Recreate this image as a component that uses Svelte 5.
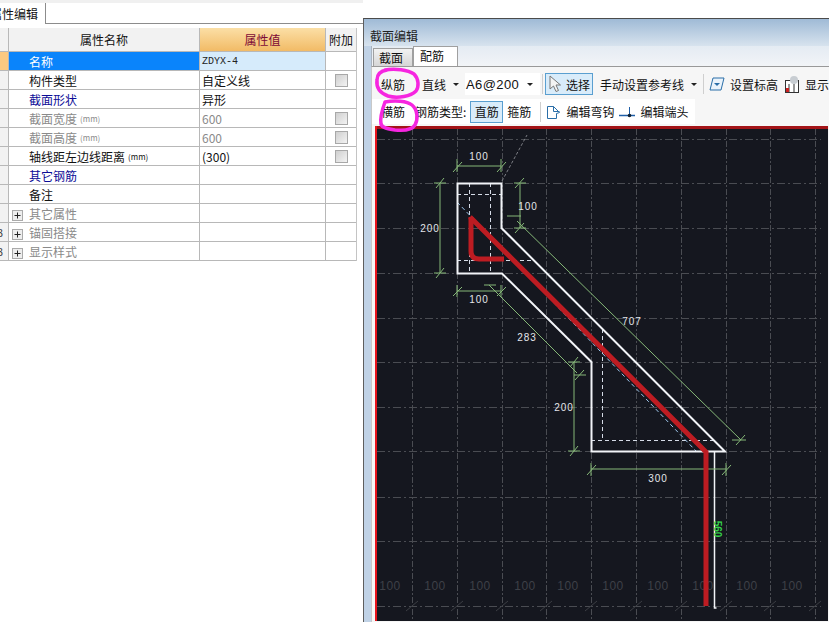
<script>
    const rows = [
        { name: "名称", value: "ZDYX-4", mono: true, selected: true },
        { name: "构件类型", value: "自定义线", check: true },
        { name: "截面形状", value: "异形", blue: true },
        { name: "截面宽度", unit: "(mm)", value: "600", gray: true, check: true },
        { name: "截面高度", unit: "(mm)", value: "600", gray: true, check: true },
        { name: "轴线距左边线距离", unit: "(mm)", value: "(300)", check: true },
        { name: "其它钢筋", value: "", blue: true },
        { name: "备注", value: "" },
        { name: "其它属性", value: "", gray: true, plus: true },
        { name: "锚固搭接", value: "", gray: true, plus: true, mark: "3" },
        { name: "显示样式", value: "", gray: true, plus: true, mark: "3" }
    ];

    const gridX = [413, 458, 503, 547, 592, 637, 682, 727, 771, 816];
    const gridY = [140, 184, 229, 274, 319, 363, 408, 452, 498, 542, 607];
    const labelX = [391, 436, 481, 526, 569, 614, 659, 704, 748, 793];

    // dimension lines: x1 y1 x2 y2
    const dims = [
        [458, 167, 502, 167], [458, 160, 458, 173], [502, 160, 502, 173], [454, 173, 463, 163], [498, 173, 507, 163],
        [441, 184, 441, 274], [435, 184, 447, 184], [435, 274, 447, 274], [437, 189, 445, 179], [437, 279, 445, 269],
        [521, 184, 521, 229], [515, 184, 527, 184], [515, 229, 527, 229], [516, 189, 525, 179], [516, 234, 525, 224],
        [508, 217, 522, 217], [518, 222, 742, 441], [733, 441, 747, 441], [737, 446, 746, 436],
        [458, 292, 502, 292], [458, 286, 458, 298], [502, 286, 502, 298], [454, 297, 463, 288], [498, 297, 507, 288],
        [490, 286, 578, 374], [485, 286, 497, 286], [575, 376, 587, 376], [576, 381, 585, 371],
        [575, 363, 575, 452], [569, 363, 581, 363], [569, 452, 581, 452], [571, 368, 579, 358], [571, 457, 579, 447],
        [592, 470, 727, 470], [592, 464, 592, 477], [727, 464, 727, 477], [588, 476, 597, 466], [723, 476, 732, 466]
    ];

    const dimLabels = [
        { x: 480, y: 161, t: "100" },
        { x: 431, y: 233, t: "200" },
        { x: 529, y: 211, t: "100" },
        { x: 480, y: 304, t: "100" },
        { x: 528, y: 342, t: "283" },
        { x: 633, y: 326, t: "707" },
        { x: 565, y: 412, t: "200" },
        { x: 659, y: 483, t: "300" }
    ];
</script>

<div class="page">
    <div class="left">
        <div class="tabstrip">
            <div class="proptab"><span>属性编辑</span></div>
        </div>
        <div class="grid">
            <div class="row head">
                <div class="mark"></div>
                <div class="cell name center">属性名称</div>
                <div class="cell value center valuehead">属性值</div>
                <div class="cell extra center">附加</div>
            </div>
            {#each rows as r}
                <div class="row">
                    <div class="mark" class:current={r.selected}>
                        {#if r.mark}<span>{r.mark}</span>{/if}
                    </div>
                    <div class="cell name" class:sel={r.selected} class:blue={r.blue} class:gray={r.gray}>
                        {#if r.plus}
                            <span class="plus"><svg width="11" height="11" viewBox="0 0 11 11"><rect x="0.5" y="0.5" width="10" height="10" fill="#eee" stroke="#aaa"/><path d="M2.5 5.5h6M5.5 2.5v6" stroke="#222"/></svg></span>
                        {/if}
                        <span class="label">{r.name}</span>
                        {#if r.unit}<span class="unit">{r.unit}</span>{/if}
                    </div>
                    <div class="cell value" class:selval={r.selected} class:gray={r.gray} class:mono={r.mono}>{r.value}</div>
                    <div class="cell extra center">
                        {#if r.check}<span class="check"></span>{/if}
                    </div>
                </div>
            {/each}
        </div>
    </div>

    <div class="window">
        <div class="title">截面编辑</div>
        <div class="body">
            <div class="tabs">
                <div class="tab">截面</div>
                <div class="tab active">配筋</div>
            </div>
            <div class="panel">
                <div class="bar">
                    <span class="tool first">纵筋</span>
                    <span class="tool line">直线</span>
                    <span class="caret"></span>
                    <span class="combo">A6@200<span class="caret"></span></span>
                    <span class="sep"></span>
                    <span class="btn pick">
                        <svg width="15" height="18" viewBox="0 0 15 18"><path d="M2 1v13l3.5-3 2.5 5.5 2.5-1-2.5-5.5h4.500z" fill="#f4f4f4" stroke="#777"/></svg>
                        选择
                    </span>
                    <span class="tool ref">手动设置参考线</span>
                    <span class="caret"></span>
                    <span class="sep gapsep"></span>
                    <svg class="icon" width="16" height="16" viewBox="0 0 16 16"><path d="M4 2h11l-3 12H1z" fill="#eaf3fb" stroke="#2a6ea8"/><path d="M5 7h6l-3 3z" fill="#2a6ea8"/></svg>
                    <span class="tool level">设置标高</span>
                    <svg class="icon chart" width="16" height="17" viewBox="0 0 16 17"><rect x="1.500" y="4.500" width="13" height="12" fill="#fff" stroke="#333"/><path d="M5 8v8M10 8v8" stroke="#333"/><rect x="2" y="12" width="3" height="4" fill="#c22"/><circle cx="10" cy="4" r="4" fill="#c8cdd2"/></svg>
                    <span class="tool show">显示</span>
                </div>
                <div class="bar second">
                    <div class="barwhite">
                        <span class="tool first2">横筋</span>
                        <span class="tool kind">钢筋类型:</span>
                        <span class="btn straight">直筋</span>
                        <span class="tool stir">箍筋</span>
                        <span class="sep hooksep"></span>
                        <svg class="icon" width="15" height="16" viewBox="0 0 15 16"><path d="M1.500 2.500h6l6 6-3 1v5h-9z" fill="#fff" stroke="#2a6ea8"/><path d="M7.500 2.500v5h6" fill="none" stroke="#2a6ea8"/></svg>
                        <span class="tool hook">编辑弯钩</span>
                        <svg class="icon endicon" width="16" height="14" viewBox="0 0 16 14"><path d="M0 10.500h16" stroke="#1f5fa8" stroke-width="1.500"/><path d="M10.500 2v8" stroke="#1f5fa8"/><circle cx="10.500" cy="10.500" r="1.800" fill="#123"/></svg>
                        <span class="tool end">编辑端头</span>
                    </div>
                </div>
                <svg class="canvas" width="453" height="495" viewBox="376 127 453 495">
                    <rect x="376" y="127" width="453" height="495" fill="#15171f"/>
                    <path d="M376 128.500h453" stroke="#a31418" stroke-width="3"/>
                    <path d="M377 127v495" stroke="#e8141c" stroke-width="2"/>

                    {#each gridX as x}
                        <path d="M{x + 0.5} 130V622" stroke="#4a4c52" stroke-dasharray="6 2 2 2"/>
                    {/each}
                    {#each gridY as y}
                        <path d="M378 {y + 0.5}H822" stroke="#4a4c52" stroke-dasharray="8 3 2 3"/>
                    {/each}
                    {#each gridX as x}
                        <path d="M{x - 6} 612l12 -10" stroke="#3c3e44"/>
                    {/each}
                    {#each labelX as x}
                        <text class="faint" {x} y="591">100</text>
                    {/each}

                    <path d="M503 182L528 136" stroke="#7c7e84" stroke-dasharray="3 2"/>

                    <g stroke="#d5dbe6" stroke-dasharray="4 3" fill="none">
                        <path d="M470.500 184V274M491.500 184V274M458 195.500H502M458 261.500H535"/>
                        <path d="M603.500 330V441M592 441.500H717"/>
                    </g>
                    <path d="M458 203L697 452" stroke="#9fc8ee" stroke-dasharray="4 3" fill="none"/>

                    <path d="M458.500 184.500H502.500V229L726 452.500H592.500V363L503 274.500H458.500Z" fill="none" stroke="#f2f4f8" stroke-width="2"/>
                    <path d="M715.500 453V609h2" fill="none" stroke="#f2f4f8" stroke-width="1.500"/>

                    <g stroke="#86b878" fill="none">
                        {#each dims as d}
                            <line x1={d[0]} y1={d[1]} x2={d[2]} y2={d[3]}/>
                        {/each}
                    </g>
                    {#each dimLabels as l}
                        <text class="dim" x={l.x} y={l.y}>{l.t}</text>
                    {/each}
                    <text class="green" transform="translate(715 530) rotate(90)">560</text>

                    <path d="M471 218L707 453V607" fill="none" stroke="#bd1c22" stroke-width="5"/>
                    <path d="M472 218V252Q472 260 480 260H505" fill="none" stroke="#bd1c22" stroke-width="5"/>
                </svg>
            </div>
        </div>
    </div>

    <svg class="scribble" width="829" height="622" viewBox="0 0 829 622">
        <path d="M385 70C395 68 408 70 414 74C419 79 419 87 416 91C411 96 398 99 388 96C380 93 376 88 377 80C377 75 380 71 387 70"/>
        <path d="M385 102C395 100 407 101 412 105C418 110 418 120 415 125C412 130 405 131 395 130C388 129 382 128 381 124C380 118 382 110 385 102"/>
    </svg>
</div>

<style>
    :global(body) {
        margin: 0;
        background: #fff;
    }

    .page {
        position: relative;
        display: flex;
        width: 829px;
        height: 622px;
        overflow: hidden;
        font-family: "Noto Sans CJK SC", "Liberation Sans", sans-serif;
        font-size: 12px;
        color: #111;
        background: #fff;
    }

    .left {
        width: 363px;
        flex-shrink: 0;
    }

    .tabstrip {
        height: 20px;
        padding-top: 3px;
        background: linear-gradient(#f0f0f0 0, #f0f0f0 3px, #fff 3px);
        border-bottom: 1px solid #8c8c8c;
    }

    .proptab {
        display: flex;
        justify-content: flex-end;
        box-sizing: border-box;
        width: 46px;
        height: 21px;
        padding: 1px 7px 0 0;
        background: #fff;
        border-right: 1px solid #8c8c8c;
        line-height: 20px;
        white-space: nowrap;
    }

    .proptab span {
        flex-shrink: 0;
    }

    .grid {
        width: 357px;
        margin-top: 4px;
        border-right: 1px solid #c4c4c4;
        box-sizing: border-box;
    }

    .row {
        display: flex;
        height: 19px;
        box-sizing: border-box;
        border-bottom: 1px solid #b8b8b8;
    }

    .row.head {
        height: 24px;
        background: #f2f2f2;
    }

    .mark {
        display: flex;
        justify-content: flex-end;
        padding-right: 5px;
        margin-right: -5px;
        box-sizing: content-box;
        width: 3px;
        flex-shrink: 0;
        background: #f2f2f2;
        border-right: 1px solid #b8b8b8;
        line-height: 18px;
        font-size: 11px;
        color: #444;
        overflow: hidden;
    }

    .mark.current {
        background: #fbc981;
    }

    .mark span {
        flex-shrink: 0;
    }

    .cell {
        display: flex;
        align-items: center;
        box-sizing: border-box;
        padding-top: 1px;
        line-height: 18px;
        white-space: nowrap;
    }

    .center {
        justify-content: center;
    }

    .name {
        width: 191px;
        margin-left: 5px;
        padding-left: 20px;
        border-right: 1px solid #b8b8b8;
        position: relative;
    }

    .head .name {
        padding-left: 0;
    }

    .head .cell {
        padding-top: 0;
    }

    .value {
        width: 126px;
        padding-left: 2px;
        border-right: 1px solid #b8b8b8;
    }

    .extra {
        width: 30px;
    }

    .valuehead {
        padding-left: 0;
        color: #7d0a36;
        background: linear-gradient(#fbdfa6, #f2bb66);
    }

    .sel {
        color: #fff;
        background: #0a84fb;
    }

    .selval {
        background: #d6ebfb;
    }

    .blue {
        color: #0b0b96;
    }

    .gray {
        color: #8a8a8a;
    }

    .mono {
        font-family: "Liberation Mono", monospace;
        font-size: 10px;
        color: #222;
    }

    .unit {
        margin-left: 3px;
        font-size: 8px;
    }

    .plus {
        position: absolute;
        left: 3px;
        top: 3px;
        height: 11px;
    }

    .check {
        width: 11px;
        height: 11px;
        background: linear-gradient(135deg, #cfcfcf, #f3f3f3);
        border: 1px solid #a8a8a8;
    }

    .window {
        flex: 1;
        display: flex;
        flex-direction: column;
        min-width: 0;
        margin-top: 18px;
        border-top: 1px solid #4b4b4b;
        border-left: 1px solid #5e5e5e;
        background: #c0d2e6;
    }

    .title {
        height: 27px;
        padding: 7px 0 0 6px;
        box-sizing: border-box;
        line-height: 20px;
        color: #222;
        background: linear-gradient(#9fbad6, #d7e3ee);
    }

    .body {
        flex: 1;
        display: flex;
        flex-direction: column;
        min-height: 0;
        margin-left: 7px;
        background: #eef2f7;
    }

    .tabs {
        display: flex;
        align-items: flex-end;
        height: 20px;
        padding-left: 1px;
        background: linear-gradient(#e4ebf3, #f2f4f7);
        border-left: 1px solid #aab4c0;
        box-sizing: border-box;
    }

    .tab {
        width: 40px;
        height: 18px;
        box-sizing: border-box;
        padding-right: 4px;
        line-height: 18px;
        text-align: center;
        background: linear-gradient(#f2f2f2, #d6d6d6);
        border: 1px solid #a0a0a0;
        border-bottom: 0;
    }

    .tab.active {
        width: 45px;
        height: 20px;
        padding-right: 7px;
        background: #fff;
    }

    .panel {
        flex: 1;
        min-height: 0;
        background: #f6f6f6;
        border-top: 1px solid #999;
        border-left: 1px solid #c8c8c8;
    }

    .bar {
        display: flex;
        align-items: center;
        height: 24px;
        margin-top: 5px;
        white-space: nowrap;
        overflow: hidden;
    }

    .bar.second {
        margin-top: 3px;
        height: 25px;
    }

    .barwhite {
        display: flex;
        align-items: center;
        width: 323px;
        height: 25px;
        background: #fff;
    }

    .first { margin-left: 9px; }
    .line { margin-left: 17px; }
    .ref { margin-left: 7px; }
    .level { margin-left: 5px; }
    .show { margin-left: 5px; }
    .first2 { margin-left: 9px; }
    .kind { margin-left: 10px; }
    .stir { margin-left: 4px; }
    .hook { margin-left: 5px; }
    .end { margin-left: 5px; }

    .caret {
        width: 0;
        height: 0;
        margin-left: 7px;
        border: 3px solid transparent;
        border-top: 3px solid #222;
        border-bottom: 0;
    }

    .combo {
        display: flex;
        align-items: center;
        justify-content: space-between;
        width: 80px;
        height: 22px;
        margin-left: 6px;
        padding: 0 7px 0 1px;
        box-sizing: border-box;
        background: #fff;
        font-family: "Liberation Sans", sans-serif;
        font-size: 13px;
        letter-spacing: 0.4px;
    }

    .sep {
        width: 1px;
        height: 20px;
        margin-left: 2px;
        background: #cfcfcf;
    }

    .gapsep { margin-left: 6px; }
    .hooksep { margin-left: 9px; }

    .btn {
        display: flex;
        align-items: center;
        justify-content: center;
        box-sizing: border-box;
        height: 22px;
        background: #d9ecfa;
        border: 1px solid #5a9fd0;
    }

    .pick {
        width: 51px;
        margin-left: 2px;
        gap: 3px;
    }

    .straight {
        width: 33px;
        margin-left: 4px;
    }

    .icon {
        flex-shrink: 0;
        margin-left: 5px;
    }

    .icon.chart { margin-left: 6px; }
    .icon.endicon { margin-left: 5px; }

    .canvas {
        display: block;
        margin: 2px 0 0 3px;
    }

    .canvas text {
        font-family: "Liberation Sans", sans-serif;
    }

    .dim {
        font-size: 10px;
        letter-spacing: 1px;
        text-anchor: middle;
        fill: #e4e6ea;
    }

    .faint {
        font-size: 12px;
        letter-spacing: 0.5px;
        text-anchor: middle;
        fill: #3e4047;
    }

    .canvas .green {
        font-size: 10px;
        font-weight: bold;
        text-anchor: middle;
        fill: #35d24a;
    }

    .scribble {
        position: absolute;
        left: 0;
        top: 0;
        pointer-events: none;
    }

    .scribble path {
        fill: none;
        stroke: #f626e0;
        stroke-width: 3.5;
        stroke-linecap: round;
    }
</style>
